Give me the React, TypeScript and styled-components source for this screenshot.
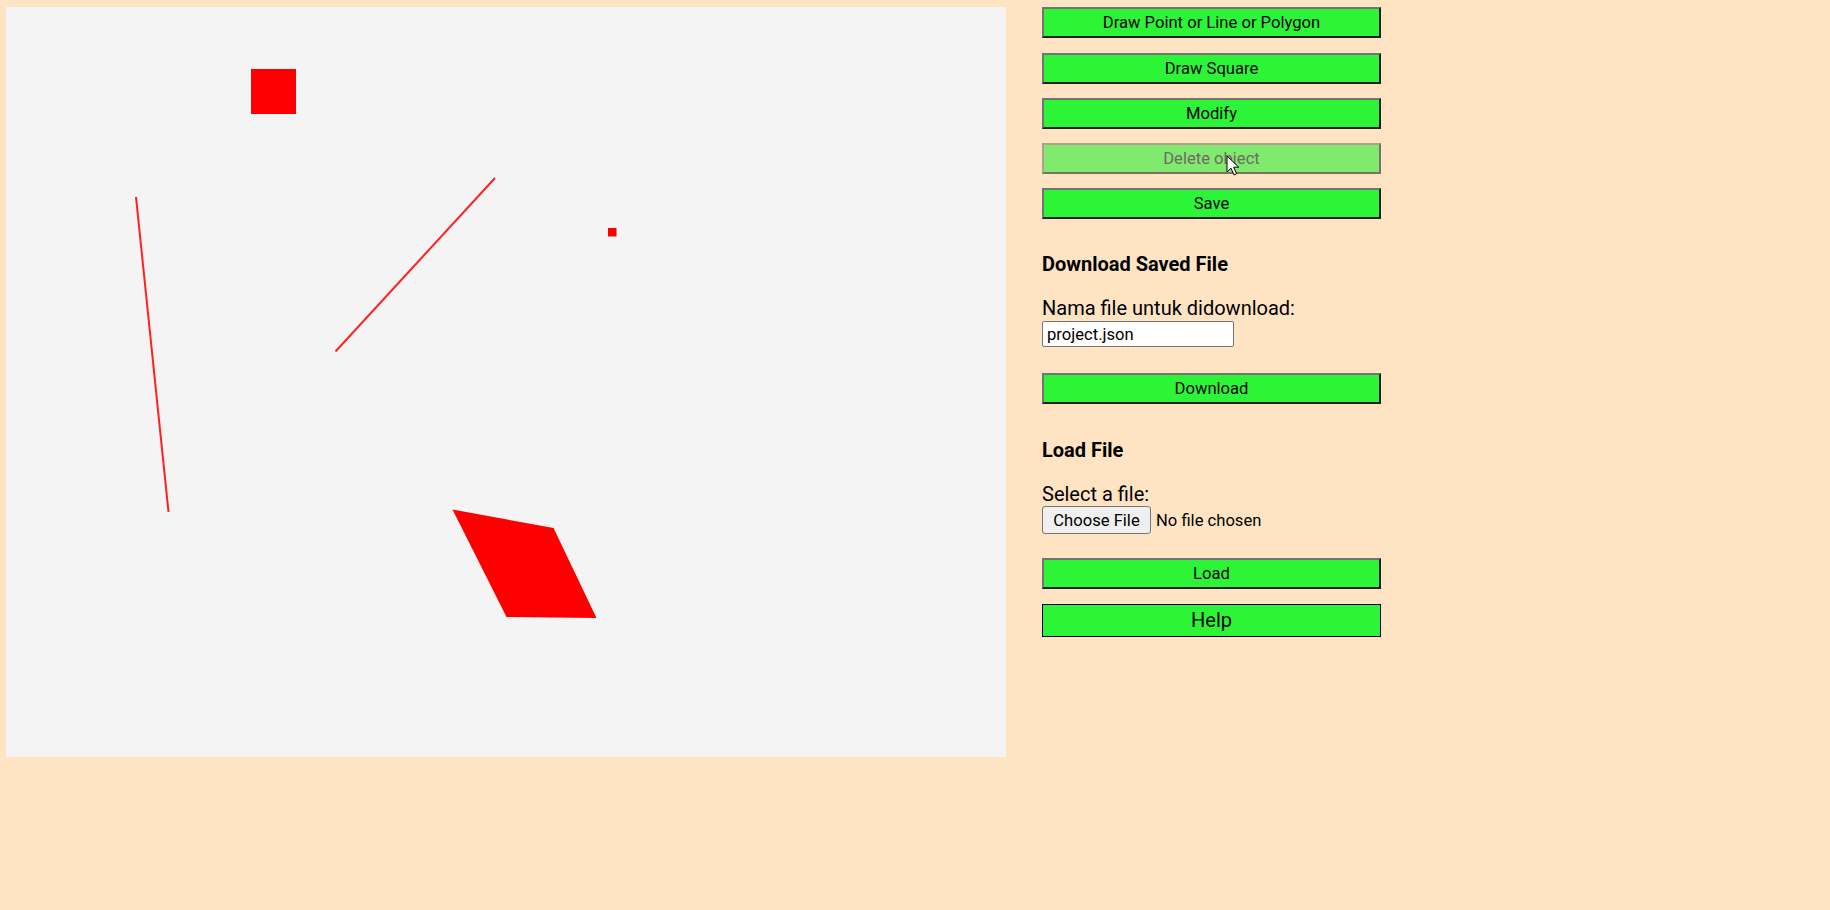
import React from "react";
import styled, { createGlobalStyle, css } from "styled-components";

const Global = createGlobalStyle`
  html, body { margin: 0; padding: 0; background: #ffe4c4; }
  body { font-family: Roboto, "Liberation Sans", sans-serif; color: #000; }
`;

const Page = styled.div`
  display: flex;
  align-items: flex-start;
  gap: 36px;
  padding: 7px 0 0 6px;
  min-height: 910px;
  box-sizing: border-box;
`;

const Board = styled.svg`
  display: block;
  width: 1000px;
  height: 750px;
  background: #f4f4f4;
  flex: none;
`;

const Panel = styled.div`
  position: relative;
  display: flex;
  flex-direction: column;
  width: 339px;
  padding-top: 0.3px;
`;

const ActionButton = styled.button<{ $gap?: number; $big?: boolean }>`
  display: block;
  width: 339px;
  height: 31px;
  margin: 0 0 ${(p) => p.$gap ?? 14.25}px 0;
  padding: 0;
  background: #2bf536;
  color: #000;
  font-family: Roboto, "Liberation Sans", sans-serif;
  font-size: 16.6px;
  border-style: solid;
  border-width: 2px;
  border-color: #737373 #1f1f1f #1f1f1f #737373;
  cursor: pointer;
  &:disabled {
    background: #80ea6e;
    color: #6e6a62;
    border-color: #b0a08c #7a7262 #7a7262 #b0a08c;
  }
  ${(p) =>
    p.$big &&
    css`
      height: 33px;
      font-size: 20px;
      border: 1px solid #000;
    `}
`;

const Heading = styled.h3<{ $top: number }>`
  margin: ${(p) => p.$top}px 0 0 0;
  font-size: 20px;
  line-height: 22px;
  font-weight: 700;
`;

const Label = styled.label`
  display: block;
  margin-top: 22px;
  font-size: 20px;
  line-height: 23px;
`;

const NameInput = styled.input`
  box-sizing: border-box;
  width: 192px;
  height: 26px;
  margin: 1px 0 26px 0;
  padding: 0 4px;
  border: 1px solid #767676;
  border-radius: 2px;
  background: #fff;
  font-family: Roboto, "Liberation Sans", sans-serif;
  font-size: 16.6px;
  color: #000;
`;

const FileRow = styled.div`
  display: flex;
  align-items: center;
  gap: 5px;
  height: 28px;
  margin-bottom: 24px;
`;

const ChooseButton = styled.button`
  box-sizing: border-box;
  width: 109px;
  height: 28px;
  padding: 0;
  background: #efefef;
  border: 1px solid #767676;
  border-radius: 3px;
  font-family: Roboto, "Liberation Sans", sans-serif;
  font-size: 16.6px;
  color: #000;
`;

const FileText = styled.span`
  font-size: 16.6px;
`;

const Cursor = styled.svg`
  position: absolute;
  left: 184px;
  top: 148px;
  width: 14px;
  height: 22px;
  pointer-events: none;
`;

export default function App() {
  return (
    <>
      <Global />
      <Page>
        <Board viewBox="0 0 1000 750">
          <rect x="245" y="62" width="45" height="45" fill="#ff0000" />
          <line x1="130" y1="190" x2="162.5" y2="505" stroke="#ff2020" strokeWidth="2" />
          <line x1="329.5" y1="344.5" x2="489" y2="171" stroke="#ff2020" strokeWidth="2" />
          <rect x="602" y="221" width="8.5" height="8.5" fill="#ff0000" />
          <polygon points="446.5,502.5 547.5,521 590.5,611 500.5,610" fill="#ff0000" />
        </Board>
        <Panel>
          <ActionButton>Draw Point or Line or Polygon</ActionButton>
          <ActionButton>Draw Square</ActionButton>
          <ActionButton>Modify</ActionButton>
          <ActionButton disabled>Delete object</ActionButton>
          <ActionButton $gap={0}>Save</ActionButton>

          <Heading $top={34}>Download Saved File</Heading>
          <Label htmlFor="fname">Nama file untuk didownload:</Label>
          <NameInput id="fname" defaultValue="project.json" />
          <ActionButton $gap={0}>Download</ActionButton>

          <Heading $top={35}>Load File</Heading>
          <Label>Select a file:</Label>
          <FileRow>
            <ChooseButton>Choose File</ChooseButton>
            <FileText>No file chosen</FileText>
          </FileRow>
          <ActionButton>Load</ActionButton>
          <ActionButton $big>Help</ActionButton>

          <Cursor viewBox="0 0 14 22">
            <path
              d="M1 1 L1 17 L5 13.2 L8 20 L10.6 18.8 L7.7 12.2 L12.8 12.2 Z"
              fill="#fff"
              stroke="#000"
              strokeWidth="1"
              strokeLinejoin="miter"
            />
          </Cursor>
        </Panel>
      </Page>
    </>
  );
}
